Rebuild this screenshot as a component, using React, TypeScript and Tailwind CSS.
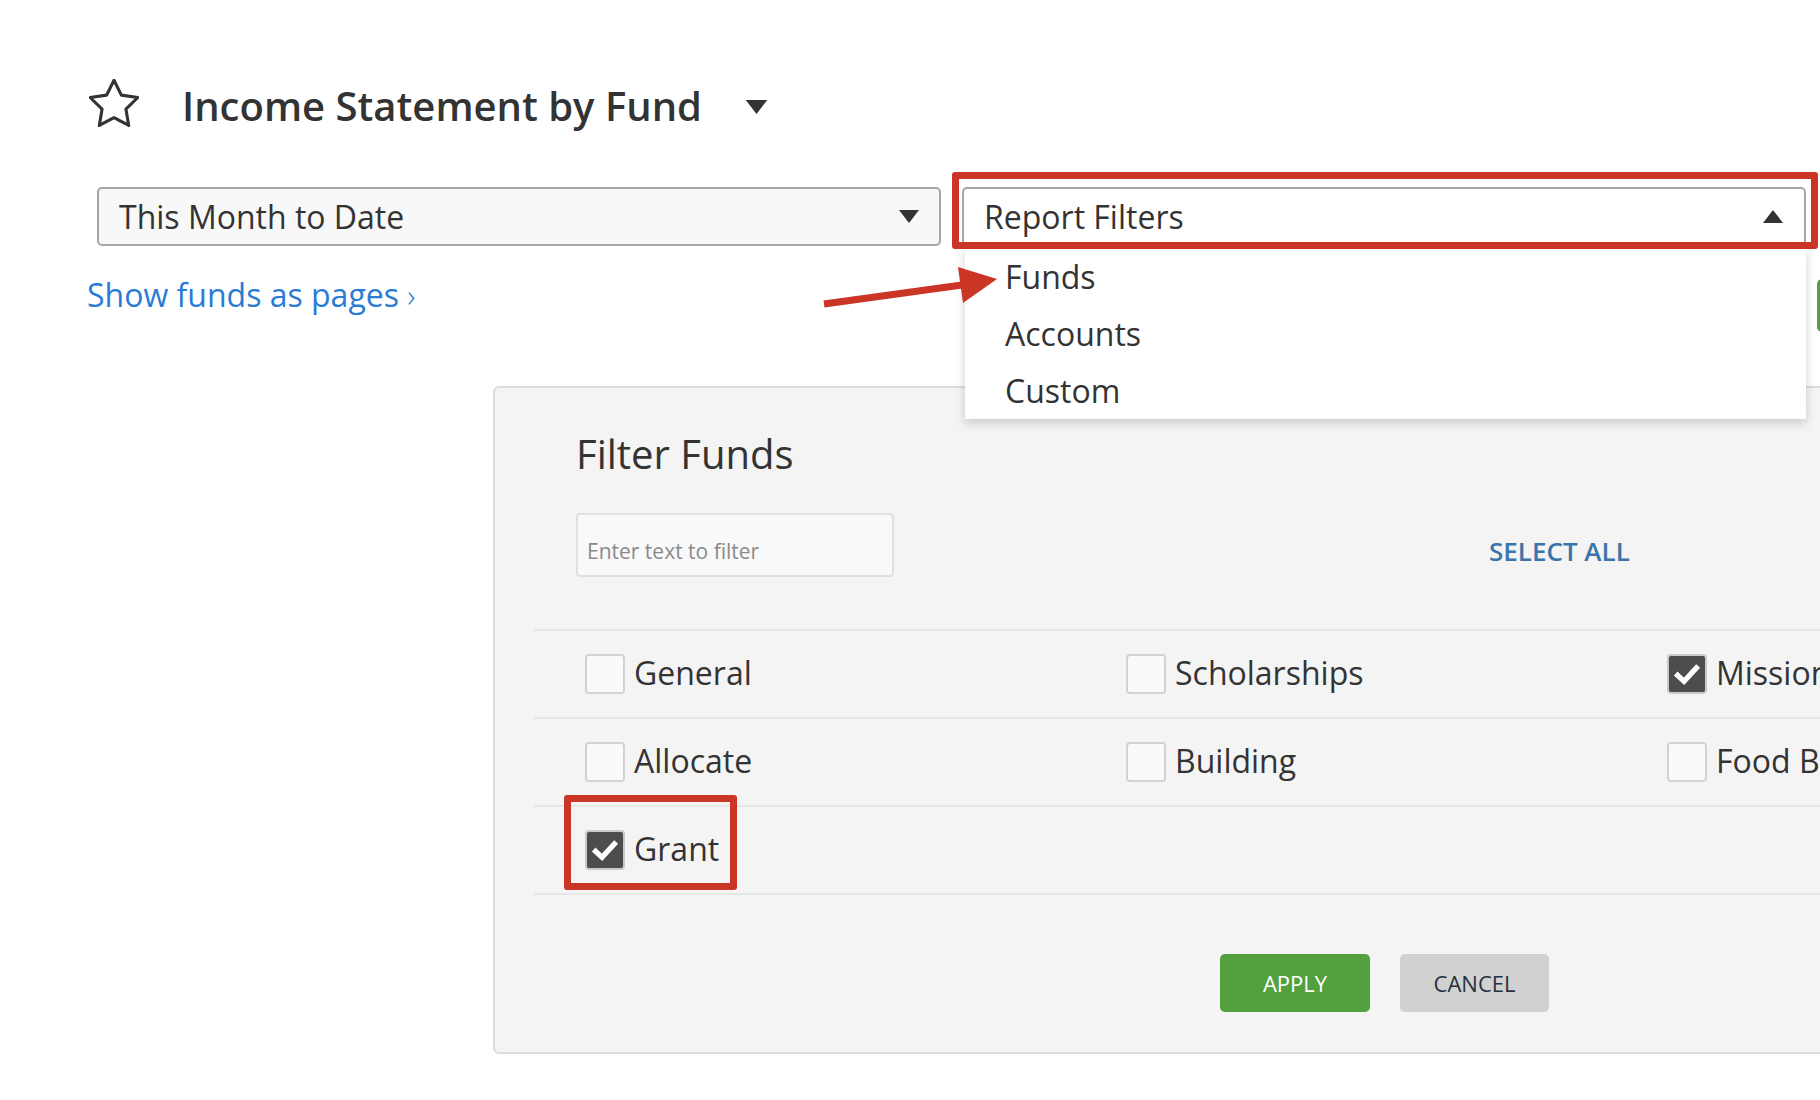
import { Fragment } from "react"

const rows = [
  [
    { name: "General", checked: false },
    { name: "Scholarships", checked: false },
    { name: "Missions", checked: true },
  ],
  [
    { name: "Allocate", checked: false },
    { name: "Building", checked: false },
    { name: "Food Bank", checked: false },
  ],
  [{ name: "Grant", checked: true }],
]

function Caret({ up = false, className = "" }: { up?: boolean; className?: string }) {
  return (
    <svg viewBox="0 0 20 13" className={className} fill="#333">
      {up ? <polygon points="10,0 20,13 0,13" /> : <polygon points="0,0 20,0 10,13" />}
    </svg>
  )
}

function Checkbox({ checked }: { checked: boolean }) {
  if (checked) {
    return (
      <div className="w-[40px] h-[40px] shrink-0 rounded-[4px] border-2 border-[#c9c9c9] bg-[#4d4d4d] flex items-center justify-center">
        <svg viewBox="0 0 24 24" className="w-[32px] h-[32px]" fill="none" stroke="#fff" strokeWidth="4" strokeLinecap="square">
          <polyline points="5,13 9.8,17.5 19,7.5" />
        </svg>
      </div>
    )
  }
  return <div className="w-[40px] h-[40px] shrink-0 rounded-[4px] border-2 border-[#d2d2d2] bg-[#fafafa]" />
}

export default function App() {
  return (
    <div className="relative w-[1820px] h-[1100px] overflow-hidden bg-white text-[#333] font-['Open_Sans',sans-serif]">
      {/* Header */}
      <div className="pt-[79px] pl-[89px]">
        <div className="flex items-center h-[50px]">
          <svg viewBox="1.5 1.5 21 21" className="w-[50px] h-[50px] shrink-0" fill="none" stroke="#333" strokeWidth="1.3" strokeLinejoin="round">
            <polygon points="12,2 15.09,8.26 22,9.27 17,14.14 18.18,21.02 12,17.77 5.82,21.02 7,14.14 2,9.27 8.91,8.26" />
          </svg>
          <h1 className="ml-[43px] text-[40px] leading-[50px] font-semibold mt-[3px]">Income Statement by Fund</h1>
          <Caret className="ml-[42px] mt-[6px] w-[25px] h-[14px]" />
        </div>
      </div>

      {/* Selects */}
      <div className="mt-[58px] pl-[97px] flex gap-[21px]">
        <div className="w-[844px] h-[59px] rounded-[5px] border-2 border-[#a6a6a6] bg-[#f8f8f8] flex items-center pl-[20px] pr-[20px]">
          <span className="text-[32px] leading-none flex-1">This Month to Date</span>
          <Caret className="w-[20px] h-[13px]" />
        </div>
        <div className="w-[844px] h-[59px] rounded-[5px] border-2 border-[#a6a6a6] bg-white flex items-center pl-[20px] pr-[21px]">
          <span className="text-[32px] leading-none flex-1">Report Filters</span>
          <Caret up className="w-[20px] h-[13px]" />
        </div>
      </div>

      {/* Link row */}
      <div className="mt-[29px] pl-[87px] flex items-start">
        <a className="text-[32px] leading-[40px] text-[#2a7bd5]">
          Show funds as pages <span className="font-light">›</span>
        </a>
        <div className="ml-auto mt-[4px] mr-[-37px] w-[40px] h-[53px] rounded-[5px] bg-[#53a03f]" />
      </div>

      {/* Filter panel */}
      <div className="mt-[54px] ml-[493px] w-[1400px] h-[668px] rounded-[6px] border-2 border-[#dcdcdc] bg-[#f4f4f4]">
        <div className="pt-[43px] pl-[81px]">
          <h2 className="text-[40px] leading-[46px]">Filter Funds</h2>
          <div className="mt-[36px] flex items-center">
            <div className="w-[318px] h-[64px] rounded-[4px] border-2 border-[#e0e0e0] bg-[#f9f9f9] flex items-center pl-[9px] pt-[13px]">
              <span className="text-[21px] text-[#8a8a8a]">Enter text to filter</span>
            </div>
            <span className="ml-[595px] mt-[12px] text-[26px] leading-[32px] font-semibold text-[#3a74a8]">SELECT ALL</span>
          </div>
        </div>

        <div className="mt-[52px] ml-[39px] border-b-2 border-[#e6e6e6]">
          {rows.map((row, i) => (
            <div key={i} className="h-[88px] border-t-2 border-[#e6e6e6] pl-[51px] flex items-center">
              {row.map((item) => (
                <Fragment key={item.name}>
                  <div className="w-[541px] shrink-0 flex items-center gap-[9px]">
                    <Checkbox checked={item.checked} />
                    <span className="text-[32px] leading-none whitespace-nowrap -mt-[3px]">{item.name}</span>
                  </div>
                </Fragment>
              ))}
            </div>
          ))}
        </div>

        <div className="mt-[59px] ml-[725px] flex gap-[30px]">
          <button className="w-[150px] h-[58px] rounded-[5px] bg-[#53a03f] text-white text-[22px]">APPLY</button>
          <button className="w-[149px] h-[58px] rounded-[5px] bg-[#d1d1d1] text-[#26323d] text-[22px]">CANCEL</button>
        </div>
      </div>

      {/* Dropdown menu */}
      <div className="absolute left-[965px] top-[248px] w-[841px] h-[171px] bg-white shadow-[0_4px_10px_rgba(0,0,0,0.18)]">
        {["Funds", "Accounts", "Custom"].map((label) => (
          <div key={label} className="h-[57px] pl-[40px] flex items-center text-[32px]">
            {label}
          </div>
        ))}
      </div>

      {/* Annotations */}
      <div className="absolute left-[952px] top-[172px] w-[866px] h-[77px] border-[7px] border-[#cb3526] rounded-[3px]" />
      <div className="absolute left-[564px] top-[795px] w-[173px] h-[95px] border-[7px] border-[#cb3526] rounded-[3px]" />
      <svg className="absolute left-0 top-0 w-[1820px] h-[1100px] pointer-events-none" viewBox="0 0 1820 1100">
        <line x1="824" y1="304" x2="962" y2="285" stroke="#cb3526" strokeWidth="7" />
        <polygon points="997,279 958,267 963,303" fill="#cb3526" />
      </svg>
    </div>
  )
}
